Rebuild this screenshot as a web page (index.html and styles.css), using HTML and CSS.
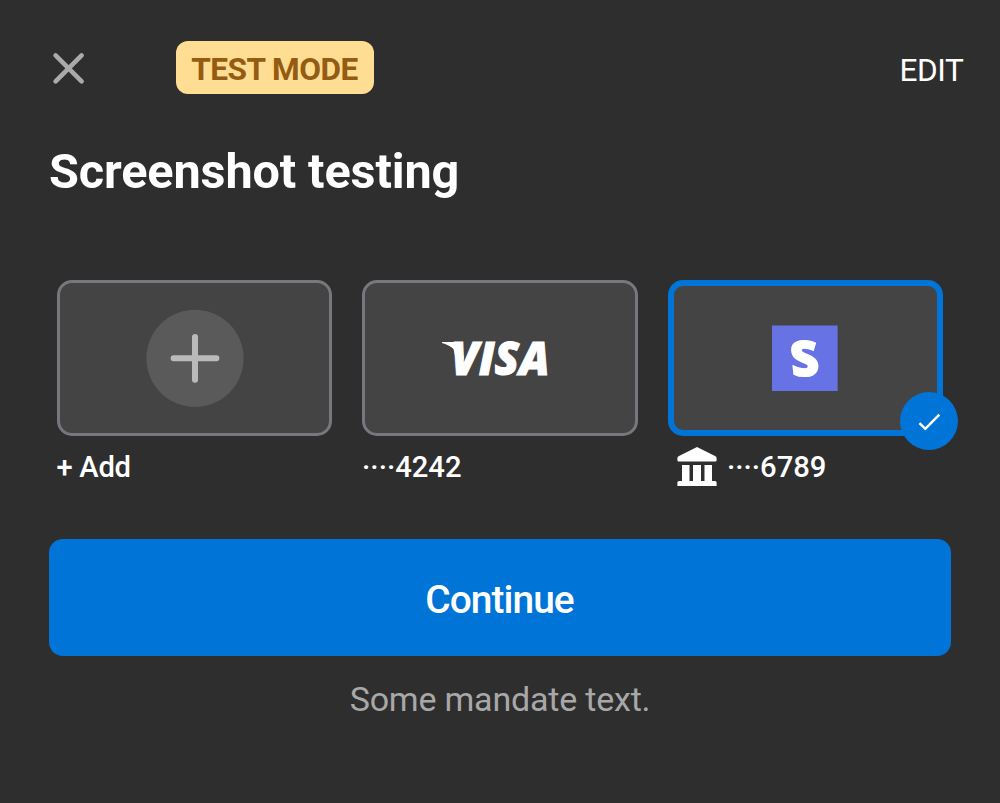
FILE: index.html
```html
<!DOCTYPE html>
<html lang="en">
<head>
<meta charset="utf-8">
<title>Screenshot testing</title>
<link rel="stylesheet" href="styles.css">
</head>
<body>
<main class="sheet">
  <header class="topbar">
    <button class="close" aria-label="Close">
      <svg width="32" height="32" viewBox="0 0 32 32"><path d="M2.6 3.4L28.6 29.4M28.6 3.4L2.6 29.4"/></svg>
    </button>
    <span class="badge">TEST MODE</span>
    <button class="edit">EDIT</button>
  </header>
  <h1 class="title">Screenshot testing</h1>
  <section class="methods">
    <div class="method">
      <div class="card">
        <svg width="99" height="98" viewBox="0 0 99 98"><circle cx="50" cy="49.3" r="48.6" fill="#5a5a5a"/><path class="plus" d="M50 27.9V70.7M28.6 49.3H71.4"/></svg>
      </div>
      <div class="label add">+ Add</div>
    </div>
    <div class="method">
      <div class="card">
        <svg class="visa" width="124" height="80" viewBox="-4 -10 124 80"><path d="M-1 13H14.5Q17.8 13 18.5 16L21 30L12.5 28L10.5 20Q7 16.2 -1 13.9Z" fill="#fff"/><text x="8" y="46.3" textLength="98.5" lengthAdjust="spacingAndGlyphs">VISA</text></svg>
      </div>
      <div class="label"><span>····</span><span>4242</span></div>
    </div>
    <div class="method">
      <div class="card selected">
        <svg class="bank-logo" width="86" height="86" viewBox="-10 -10 86 86"><rect y=".5" width="65.6" height="65.5" fill="#6772e5"/><text class="mark" transform="translate(20 51) skewX(6)" x="0" y="0" textLength="28.5" lengthAdjust="spacingAndGlyphs">S</text></svg>
        <span class="check"><svg width="58" height="58" viewBox="0 0 58 58"><path d="M19.5 31.1L25.3 36.8L39.3 22.6"/></svg></span>
      </div>
      <div class="label bank-label">
        <svg width="40" height="40" viewBox="0 0 40 40" fill="#fff"><path d="M20 0L38.5 9.3Q39.6 10 39.6 11.2V13.2Q39.6 14.6 38.2 14.6H1.8Q.4 14.6 .4 13.2V11.2Q.4 10 1.5 9.3ZM5 18H12.5V34H16V18H24V34H27.5V18H35V34H38Q39.6 34 39.6 35.6V39H.4V35.6Q.4 34 2 34H5Z"/></svg>
        <span class="dots">····</span><span>6789</span>
      </div>
    </div>
  </section>
  <button class="continue">Continue</button>
  <p class="mandate">Some mandate text.</p>
</main>
</body>
</html>
```
FILE: styles.css
```css
* { box-sizing: border-box; }
body { margin: 0; background: #2e2e2e; font-family: Roboto, sans-serif; color: #fff; }
button { border: 0; padding: 0; background: none; color: inherit; font: inherit; }
svg { display: block; overflow: visible; }
.sheet { height: 803px; padding: 41.4px 36.5px 0 49px; display: flex; flex-direction: column; }
.topbar { display: flex; align-items: center; height: 53px; }
.close { margin-left: 3.5px; }
.close path { stroke: #aaa; stroke-width: 4.6; stroke-linecap: round; }
.badge { margin-left: 91.5px; width: 198px; height: 53.2px; border-radius: 12px; background: #ffdd93; color: #945b12; display: flex; justify-content: center; padding: 1.9px 1px 0 0; font-size: 31.6px; font-weight: 700; letter-spacing: -0.5px; line-height: 53px; white-space: nowrap; }
.edit { margin-left: auto; padding-top: 7px; font-size: 31.6px; letter-spacing: -0.4px; line-height: 38px; }
.title { margin: 47.2px 0 0; font-size: 48.6px; font-weight: 700; letter-spacing: -0.12px; line-height: 60px; white-space: nowrap; }
.methods { display: flex; gap: 30px; margin: 78.4px 0 0 7.5px; }
.method { width: 275.6px; flex: none; }
.card { position: relative; height: 155.6px; border: 3px solid #77777e; border-radius: 15px; background: #444; display: flex; align-items: center; justify-content: center; }
.plus { stroke: #bababa; stroke-width: 6; stroke-linecap: round; }
.visa { margin: 2px 0 0 2px; }
.visa text { font: italic 800 46px "Open Sans", sans-serif; fill: #fff; stroke: #fff; stroke-width: 1; }
.bank-logo { margin-right: 1px; }
.mark { font: 800 49px "Open Sans", sans-serif; fill: #fff; stroke: #fff; stroke-width: 1.2; }
.selected { border: 6px solid #0074d7; }
.check { position: absolute; right: -20.5px; bottom: -20.5px; width: 58px; height: 58px; border-radius: 50%; background: #0074d7; }
.check path { fill: none; stroke: #fff; stroke-width: 2.5; }
.label { display: flex; align-items: center; height: 63px; font-size: 29.2px; font-weight: 500; line-height: 63px; }
.add { letter-spacing: -0.3px; }
.bank-label { padding-left: 9px; }
.dots { margin-left: 10.3px; }
.continue { margin: 40.8px 12.5px 0 0; width: 902px; height: 116.5px; border-radius: 14px; background: #0074d7; padding: 4px 1px 0 0; font-size: 38.9px; font-weight: 500; letter-spacing: -0.95px; }
.mandate { margin: 23px 0 0; width: 902px; text-align: center; color: #a8a8a8; font-size: 34px; letter-spacing: -0.2px; line-height: 40px; }
```
